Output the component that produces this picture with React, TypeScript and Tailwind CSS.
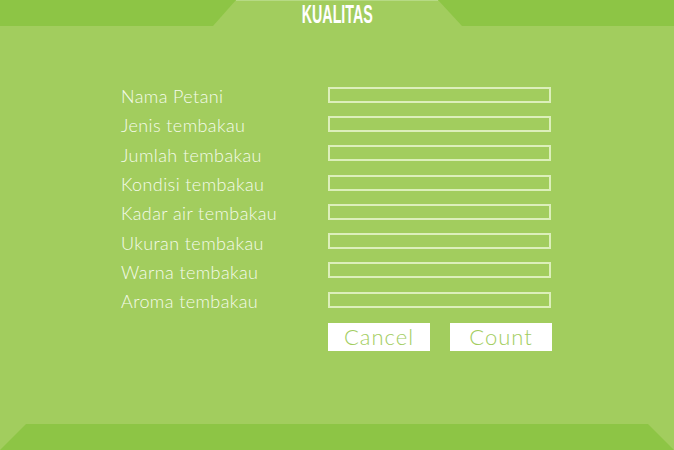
import React from "react";

const fields = [
  "Nama Petani",
  "Jenis tembakau",
  "Jumlah tembakau",
  "Kondisi tembakau",
  "Kadar air tembakau",
  "Ukuran tembakau",
  "Warna tembakau",
  "Aroma tembakau",
];

export default function App() {
  return (
    <div className="w-[674px] h-[450px] bg-[#a2cd5e] flex flex-col overflow-hidden" style={{ fontFamily: "Lato, 'Noto Sans', sans-serif" }}>
      <div className="h-[26px] flex shrink-0">
        <div className="w-[236px] bg-[#8dc545] [clip-path:polygon(0_0,100%_0,calc(100%-23px)_100%,0_100%)]" />
        <div className="flex-1 border-t border-[#b6da84] flex items-center justify-center">
          <span className="inline-block text-white text-[25px] font-bold leading-none mt-[2px] scale-x-[0.57]" style={{ fontFamily: "'Liberation Sans', Arial, sans-serif" }}>
            KUALITAS
          </span>
        </div>
        <div className="w-[236px] bg-[#8dc545] [clip-path:polygon(0_0,100%_0,100%_100%,24px_100%)]" />
      </div>
      <div className="flex-1 pt-[54px] pl-[121px]">
        <div className="flex flex-col">
          {fields.map((f) => (
            <div key={f} className="h-[29.3px] flex items-center">
              <div className="w-[207px] text-[18px] font-light text-[#f5fbeb] leading-none pt-[3px] tracking-[0.4px]">{f}</div>
              <div className="w-[223px] h-[16px] border-2 border-[#dcefba]" />
            </div>
          ))}
        </div>
        <div className="flex gap-[20px] ml-[207px] mt-[9px]">
          <button className="w-[102px] h-[28px] bg-white text-[#a2cd5e] text-[22px] font-light leading-none tracking-[1px]">Cancel</button>
          <button className="w-[102px] h-[28px] bg-white text-[#a2cd5e] text-[22px] font-light leading-none tracking-[1px]">Count</button>
        </div>
      </div>
      <div className="h-[26px] shrink-0 bg-[#8dc545] [clip-path:polygon(26px_0,calc(100%-26px)_0,100%_100%,0_100%)]" />
    </div>
  );
}
